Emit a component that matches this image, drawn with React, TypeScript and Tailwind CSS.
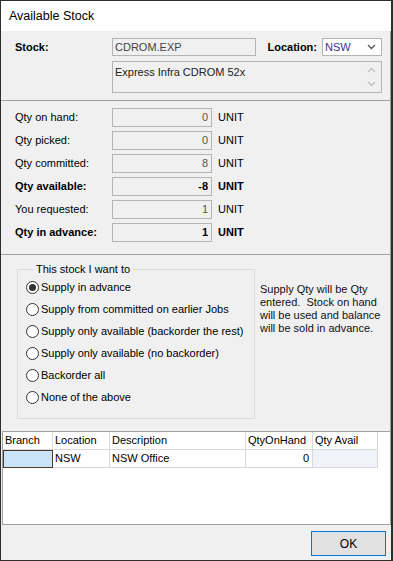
import React from "react";

const qtyRows = [
  { label: "Qty on hand:", value: "0", bold: false },
  { label: "Qty picked:", value: "0", bold: false },
  { label: "Qty committed:", value: "8", bold: false },
  { label: "Qty available:", value: "-8", bold: true },
  { label: "You requested:", value: "1", bold: false },
  { label: "Qty in advance:", value: "1", bold: true },
];

const options = [
  "Supply in advance",
  "Supply from committed on earlier Jobs",
  "Supply only available (backorder the rest)",
  "Supply only available (no backorder)",
  "Backorder all",
  "None of the above",
];

function Chevron({ up = false, color = "#555" }: { up?: boolean; color?: string }) {
  return (
    <svg width="9" height="6" viewBox="0 0 9 6">
      <path
        d={up ? "M1 5 L4.5 1.5 L8 5" : "M1 1 L4.5 4.5 L8 1"}
        fill="none"
        stroke={color}
        strokeWidth="1.3"
      />
    </svg>
  );
}

function Radio({ checked }: { checked: boolean }) {
  return (
    <div className="w-[13px] h-[13px] rounded-full border border-[#333] bg-white flex items-center justify-center shrink-0">
      {checked && <div className="w-[7px] h-[7px] rounded-full bg-[#333]" />}
    </div>
  );
}

export default function App() {
  return (
    <div className="w-[393px] h-[561px] border-l border-t border-b border-r-2 border-[#2e2e2e] bg-[#f0f0f0] flex flex-col font-['Liberation_Sans',Arial,sans-serif] text-[11px] text-black leading-none">
      {/* title */}
      <div className="h-[30px] bg-white flex items-center pl-[8px] text-[12.5px] shrink-0">
        Available Stock
      </div>

      {/* stock */}
      <div className="h-[70px] border-b border-r border-[#a0a0a0] pt-[7px] flex flex-col gap-[5px] shrink-0">
        <div className="flex items-center h-[18px]">
          <div className="w-[111px] pl-[14px] font-bold">Stock:</div>
          <div className="w-[144px] h-[18px] border border-[#b4b4b4] flex items-center px-[2px] text-[#444]">
            CDROM.EXP
          </div>
          <div className="w-[66px] text-right pr-[5px] font-bold">Location:</div>
          <div className="w-[60px] h-[18px] border border-[#b4b4b4] bg-white flex items-center pl-[2px] pr-[5px] justify-between text-[#333399]">
            <span>NSW</span>
            <Chevron />
          </div>
        </div>
        <div className="flex">
          <div className="w-[111px]" />
          <div className="w-[270px] h-[32px] border border-[#b4b4b4] flex justify-between pl-[2px] pr-[5px]">
            <span className="pt-[5px] text-[#222]">Express Infra CDROM 52x</span>
            <div className="flex flex-col justify-between py-[5px]">
              <Chevron up color="#c0c0c0" />
              <Chevron color="#c0c0c0" />
            </div>
          </div>
        </div>
      </div>

      {/* quantities */}
      <div className="h-[154px] border-b border-r border-[#a0a0a0] pt-[7px] flex flex-col gap-[4px] shrink-0">
        {qtyRows.map((r) => (
          <div key={r.label} className="flex items-center h-[19px]">
            <div className={`w-[111px] pl-[14px] ${r.bold ? "font-bold" : ""}`}>{r.label}</div>
            <div
              className={`w-[100px] h-[19px] border border-[#b4b4b4] flex items-center justify-end pr-[3px] ${
                r.bold ? "font-bold text-black" : "text-[#555]"
              }`}
            >
              {r.value}
            </div>
            <div className={`ml-[6px] ${r.bold ? "font-bold" : ""}`}>UNIT</div>
          </div>
        ))}
      </div>

      {/* options */}
      <div className="h-[176px] border-r border-[#a0a0a0] pt-[8px] pl-[16px] flex gap-[5px] shrink-0">
        <fieldset className="w-[238px] h-[156px] border border-[#dcdcdc] px-[8px] pb-[9px]">
          <legend className="ml-[7px] px-[3px] leading-[13px]">This stock I want to</legend>
          <div className="flex flex-col">
            {options.map((o, i) => (
              <div key={o} className="h-[22px] flex items-center">
                <Radio checked={i === 0} />
                <span className="ml-[2px]">{o}</span>
              </div>
            ))}
          </div>
        </fieldset>
        <div className="pt-[20px] leading-[13px] whitespace-pre text-[#111]">
          {"Supply Qty will be Qty\nentered.  Stock on hand\nwill be used and balance\nwill be sold in advance."}
        </div>
      </div>

      {/* grid */}
      <div className="h-[94px] ml-[1px] border border-[#a0a0a0] bg-white shrink-0">
        <div className="flex h-[18px]">
          {[
            ["Branch", "w-[50px]"],
            ["Location", "w-[57px]"],
            ["Description", "w-[136px]"],
            ["QtyOnHand", "w-[67px]"],
            ["Qty Avail", "w-[65px]"],
          ].map(([t, w]) => (
            <div key={t} className={`${w} border-r border-b border-[#d8d8d8] flex items-center pl-[2px]`}>
              {t}
            </div>
          ))}
        </div>
        <div className="flex h-[18px]">
          <div className="w-[50px] bg-[#cce4f7] border border-[#4a3a2a]" />
          <div className="w-[57px] border-r border-b border-[#d8d8d8] flex items-center pl-[2px]">NSW</div>
          <div className="w-[136px] border-r border-b border-[#d8d8d8] flex items-center pl-[2px]">NSW Office</div>
          <div className="w-[67px] border-r border-b border-[#d8d8d8] flex items-center justify-end pr-[3px]">0</div>
          <div className="w-[65px] border-r border-b border-[#d8d8d8] bg-[#f0f3f9]" />
        </div>
      </div>

      {/* footer */}
      <div className="flex-1 flex justify-end items-start pt-[6px] pr-[5px]">
        <button className="w-[75px] h-[25px] border border-[#0078d7] bg-[#e1e1e1] text-[12px] flex items-center justify-center">
          OK
        </button>
      </div>
    </div>
  );
}
